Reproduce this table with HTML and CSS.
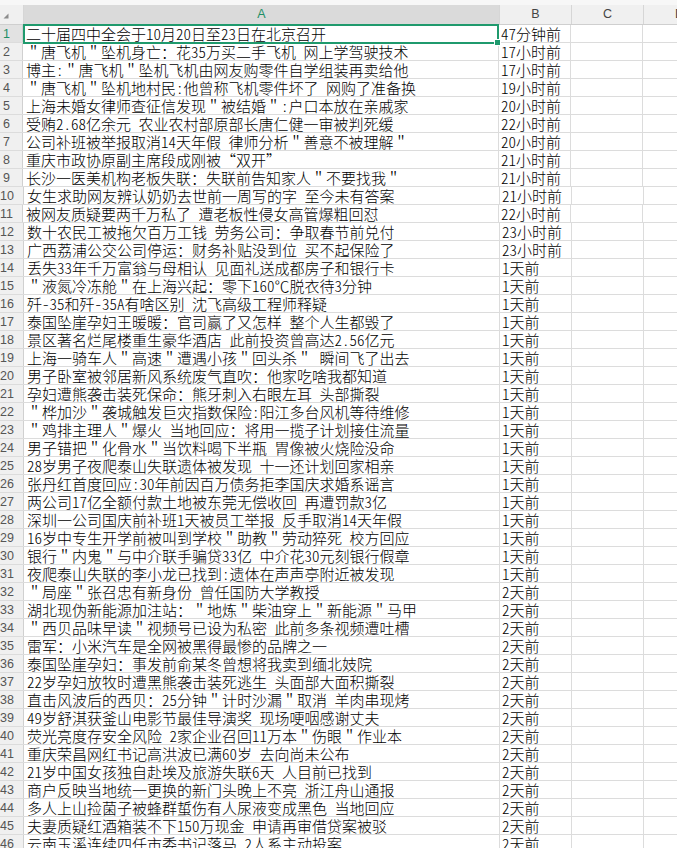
FILE: index.html
```html
<!DOCTYPE html>
<html lang="zh-CN">
<head>
<meta charset="utf-8">
<title>Sheet</title>
<link rel="stylesheet" href="styles.css">
</head>
<body>
<div class="sheet">
  <div class="topstrip"></div>
  <div class="hdr">
    <div class="corner"><svg width="23" height="19" viewBox="0 0 23 19"><polygon points="3.5,13.5 8.5,13.5 8.5,8.5" fill="#8c8c8c"/></svg></div>
    <div class="ch col-a sel">A</div>
    <div class="ch col-b">B</div>
    <div class="ch col-c">C</div>
    <div class="ch col-d">D</div>
  </div>
  <div class="grid">
    <div class="row"><div class="rh sel">1</div><div class="cell col-a">二十届四中全会于10月20日至23日在北京召开</div><div class="cell col-b">47分钟前</div><div class="cell col-c"></div><div class="cell col-d"></div></div>
    <div class="row"><div class="rh">2</div><div class="cell col-a"><span class="q">＂</span>唐飞机<span class="q">＂</span>坠机身亡：花35万买二手飞机 网上学驾驶技术</div><div class="cell col-b">17小时前</div><div class="cell col-c"></div><div class="cell col-d"></div></div>
    <div class="row"><div class="rh">3</div><div class="cell col-a">博主:<span class="q">＂</span>唐飞机<span class="q">＂</span>坠机飞机由网友购零件自学组装再卖给他</div><div class="cell col-b">17小时前</div><div class="cell col-c"></div><div class="cell col-d"></div></div>
    <div class="row"><div class="rh">4</div><div class="cell col-a"><span class="q">＂</span>唐飞机<span class="q">＂</span>坠机地村民:他曾称飞机零件坏了 网购了准备换</div><div class="cell col-b">19小时前</div><div class="cell col-c"></div><div class="cell col-d"></div></div>
    <div class="row"><div class="rh">5</div><div class="cell col-a">上海未婚女律师查征信发现<span class="q">＂</span>被结婚<span class="q">＂</span>:户口本放在亲戚家</div><div class="cell col-b">20小时前</div><div class="cell col-c"></div><div class="cell col-d"></div></div>
    <div class="row"><div class="rh">6</div><div class="cell col-a">受贿2.68亿余元 农业农村部原部长唐仁健一审被判死缓</div><div class="cell col-b">22小时前</div><div class="cell col-c"></div><div class="cell col-d"></div></div>
    <div class="row"><div class="rh">7</div><div class="cell col-a">公司补班被举报取消14天年假 律师分析<span class="q">＂</span>善意不被理解<span class="q">＂</span></div><div class="cell col-b">20小时前</div><div class="cell col-c"></div><div class="cell col-d"></div></div>
    <div class="row"><div class="rh">8</div><div class="cell col-a">重庆市政协原副主席段成刚被<span class="q">“</span>双开<span class="q">”</span></div><div class="cell col-b">21小时前</div><div class="cell col-c"></div><div class="cell col-d"></div></div>
    <div class="row"><div class="rh">9</div><div class="cell col-a">长沙一医美机构老板失联：失联前告知家人<span class="q">＂</span>不要找我<span class="q">＂</span></div><div class="cell col-b">21小时前</div><div class="cell col-c"></div><div class="cell col-d"></div></div>
    <div class="row"><div class="rh">10</div><div class="cell col-a">女生求助网友辨认奶奶去世前一周写的字 至今未有答案</div><div class="cell col-b">21小时前</div><div class="cell col-c"></div><div class="cell col-d"></div></div>
    <div class="row"><div class="rh">11</div><div class="cell col-a">被网友质疑要两千万私了 遭老板性侵女高管爆粗回怼</div><div class="cell col-b">22小时前</div><div class="cell col-c"></div><div class="cell col-d"></div></div>
    <div class="row"><div class="rh">12</div><div class="cell col-a">数十农民工被拖欠百万工钱 劳务公司：争取春节前兑付</div><div class="cell col-b">23小时前</div><div class="cell col-c"></div><div class="cell col-d"></div></div>
    <div class="row"><div class="rh">13</div><div class="cell col-a">广西荔浦公交公司停运：财务补贴没到位 买不起保险了</div><div class="cell col-b">23小时前</div><div class="cell col-c"></div><div class="cell col-d"></div></div>
    <div class="row"><div class="rh">14</div><div class="cell col-a">丢失33年千万富翁与母相认 见面礼送成都房子和银行卡</div><div class="cell col-b">1天前</div><div class="cell col-c"></div><div class="cell col-d"></div></div>
    <div class="row"><div class="rh">15</div><div class="cell col-a"><span class="q">＂</span>液氮冷冻舱<span class="q">＂</span>在上海兴起：零下160℃脱衣待3分钟</div><div class="cell col-b">1天前</div><div class="cell col-c"></div><div class="cell col-d"></div></div>
    <div class="row"><div class="rh">16</div><div class="cell col-a">歼-35和歼-35A有啥区别 沈飞高级工程师释疑</div><div class="cell col-b">1天前</div><div class="cell col-c"></div><div class="cell col-d"></div></div>
    <div class="row"><div class="rh">17</div><div class="cell col-a">泰国坠崖孕妇王暖暖：官司赢了又怎样 整个人生都毁了</div><div class="cell col-b">1天前</div><div class="cell col-c"></div><div class="cell col-d"></div></div>
    <div class="row"><div class="rh">18</div><div class="cell col-a">景区著名烂尾楼重生豪华酒店 此前投资曾高达2.56亿元</div><div class="cell col-b">1天前</div><div class="cell col-c"></div><div class="cell col-d"></div></div>
    <div class="row"><div class="rh">19</div><div class="cell col-a">上海一骑车人<span class="q">＂</span>高速<span class="q">＂</span>遭遇小孩<span class="q">＂</span>回头杀<span class="q">＂</span> 瞬间飞了出去</div><div class="cell col-b">1天前</div><div class="cell col-c"></div><div class="cell col-d"></div></div>
    <div class="row"><div class="rh">20</div><div class="cell col-a">男子卧室被邻居新风系统废气直吹：他家吃啥我都知道</div><div class="cell col-b">1天前</div><div class="cell col-c"></div><div class="cell col-d"></div></div>
    <div class="row"><div class="rh">21</div><div class="cell col-a">孕妇遭熊袭击装死保命：熊牙刺入右眼左耳 头部撕裂</div><div class="cell col-b">1天前</div><div class="cell col-c"></div><div class="cell col-d"></div></div>
    <div class="row"><div class="rh">22</div><div class="cell col-a"><span class="q">＂</span>桦加沙<span class="q">＂</span>袭城触发巨灾指数保险:阳江多台风机等待维修</div><div class="cell col-b">1天前</div><div class="cell col-c"></div><div class="cell col-d"></div></div>
    <div class="row"><div class="rh">23</div><div class="cell col-a"><span class="q">＂</span>鸡排主理人<span class="q">＂</span>爆火 当地回应：将用一揽子计划接住流量</div><div class="cell col-b">1天前</div><div class="cell col-c"></div><div class="cell col-d"></div></div>
    <div class="row"><div class="rh">24</div><div class="cell col-a">男子错把<span class="q">＂</span>化骨水<span class="q">＂</span>当饮料喝下半瓶 胃像被火烧险没命</div><div class="cell col-b">1天前</div><div class="cell col-c"></div><div class="cell col-d"></div></div>
    <div class="row"><div class="rh">25</div><div class="cell col-a">28岁男子夜爬泰山失联遗体被发现 十一还计划回家相亲</div><div class="cell col-b">1天前</div><div class="cell col-c"></div><div class="cell col-d"></div></div>
    <div class="row"><div class="rh">26</div><div class="cell col-a">张丹红首度回应:30年前因百万债务拒李国庆求婚系谣言</div><div class="cell col-b">1天前</div><div class="cell col-c"></div><div class="cell col-d"></div></div>
    <div class="row"><div class="rh">27</div><div class="cell col-a">两公司17亿全额付款土地被东莞无偿收回 再遭罚款3亿</div><div class="cell col-b">1天前</div><div class="cell col-c"></div><div class="cell col-d"></div></div>
    <div class="row"><div class="rh">28</div><div class="cell col-a">深圳一公司国庆前补班1天被员工举报 反手取消14天年假</div><div class="cell col-b">1天前</div><div class="cell col-c"></div><div class="cell col-d"></div></div>
    <div class="row"><div class="rh">29</div><div class="cell col-a">16岁中专生开学前被叫到学校<span class="q">＂</span>助教<span class="q">＂</span>劳动猝死 校方回应</div><div class="cell col-b">1天前</div><div class="cell col-c"></div><div class="cell col-d"></div></div>
    <div class="row"><div class="rh">30</div><div class="cell col-a">银行<span class="q">＂</span>内鬼<span class="q">＂</span>与中介联手骗贷33亿 中介花30元刻银行假章</div><div class="cell col-b">1天前</div><div class="cell col-c"></div><div class="cell col-d"></div></div>
    <div class="row"><div class="rh">31</div><div class="cell col-a">夜爬泰山失联的李小龙已找到:遗体在声声亭附近被发现</div><div class="cell col-b">1天前</div><div class="cell col-c"></div><div class="cell col-d"></div></div>
    <div class="row"><div class="rh">32</div><div class="cell col-a"><span class="q">＂</span>局座<span class="q">＂</span>张召忠有新身份 曾任国防大学教授</div><div class="cell col-b">2天前</div><div class="cell col-c"></div><div class="cell col-d"></div></div>
    <div class="row"><div class="rh">33</div><div class="cell col-a">湖北现伪新能源加注站：<span class="q">＂</span>地炼<span class="q">＂</span>柴油穿上<span class="q">＂</span>新能源<span class="q">＂</span>马甲</div><div class="cell col-b">2天前</div><div class="cell col-c"></div><div class="cell col-d"></div></div>
    <div class="row"><div class="rh">34</div><div class="cell col-a"><span class="q">＂</span>西贝品味早读<span class="q">＂</span>视频号已设为私密 此前多条视频遭吐槽</div><div class="cell col-b">2天前</div><div class="cell col-c"></div><div class="cell col-d"></div></div>
    <div class="row"><div class="rh">35</div><div class="cell col-a">雷军：小米汽车是全网被黑得最惨的品牌之一</div><div class="cell col-b">2天前</div><div class="cell col-c"></div><div class="cell col-d"></div></div>
    <div class="row"><div class="rh">36</div><div class="cell col-a">泰国坠崖孕妇：事发前俞某冬曾想将我卖到缅北妓院</div><div class="cell col-b">2天前</div><div class="cell col-c"></div><div class="cell col-d"></div></div>
    <div class="row"><div class="rh">37</div><div class="cell col-a">22岁孕妇放牧时遭黑熊袭击装死逃生 头面部大面积撕裂</div><div class="cell col-b">2天前</div><div class="cell col-c"></div><div class="cell col-d"></div></div>
    <div class="row"><div class="rh">38</div><div class="cell col-a">直击风波后的西贝：25分钟<span class="q">＂</span>计时沙漏<span class="q">＂</span>取消 羊肉串现烤</div><div class="cell col-b">2天前</div><div class="cell col-c"></div><div class="cell col-d"></div></div>
    <div class="row"><div class="rh">39</div><div class="cell col-a">49岁舒淇获釜山电影节最佳导演奖 现场哽咽感谢丈夫</div><div class="cell col-b">2天前</div><div class="cell col-c"></div><div class="cell col-d"></div></div>
    <div class="row"><div class="rh">40</div><div class="cell col-a">荧光亮度存安全风险 2家企业召回11万本<span class="q">＂</span>伤眼<span class="q">＂</span>作业本</div><div class="cell col-b">2天前</div><div class="cell col-c"></div><div class="cell col-d"></div></div>
    <div class="row"><div class="rh">41</div><div class="cell col-a">重庆荣昌网红书记高洪波已满60岁 去向尚未公布</div><div class="cell col-b">2天前</div><div class="cell col-c"></div><div class="cell col-d"></div></div>
    <div class="row"><div class="rh">42</div><div class="cell col-a">21岁中国女孩独自赴埃及旅游失联6天 人目前已找到</div><div class="cell col-b">2天前</div><div class="cell col-c"></div><div class="cell col-d"></div></div>
    <div class="row"><div class="rh">43</div><div class="cell col-a">商户反映当地统一更换的新门头晚上不亮 浙江舟山通报</div><div class="cell col-b">2天前</div><div class="cell col-c"></div><div class="cell col-d"></div></div>
    <div class="row"><div class="rh">44</div><div class="cell col-a">多人上山捡菌子被蜂群蜇伤有人尿液变成黑色 当地回应</div><div class="cell col-b">2天前</div><div class="cell col-c"></div><div class="cell col-d"></div></div>
    <div class="row"><div class="rh">45</div><div class="cell col-a">夫妻质疑红酒箱装不下150万现金 申请再审借贷案被驳</div><div class="cell col-b">2天前</div><div class="cell col-c"></div><div class="cell col-d"></div></div>
    <div class="row"><div class="rh">46</div><div class="cell col-a">云南玉溪连续四任市委书记落马 2人系主动投案</div><div class="cell col-b">2天前</div><div class="cell col-c"></div><div class="cell col-d"></div></div>
  </div>
  <div class="selbox"><span class="handle"></span></div>
</div>
</body>
</html>
```

FILE: styles.css
```css
html, body {
  margin: 0;
  padding: 0;
  background: #ffffff;
}

.sheet {
  position: relative;
  width: 677px;
  height: 848px;
  overflow: hidden;
  background: #ffffff;
}

.topstrip {
  height: 5px;
  background: #f7f7f7;
}

.hdr {
  display: flex;
  height: 20px;
  background: #f0f0f0;
  box-sizing: border-box;
  border-bottom: 1px solid #cfcfcf;
}

.corner {
  flex: 0 0 23px;
  box-sizing: border-box;
  border-right: 1px solid #d6d6d6;
  display: flex;
}

.ch {
  flex: 0 0 auto;
  box-sizing: border-box;
  border-right: 1px solid #d6d6d6;
  font-family: "Liberation Sans", Arial, sans-serif;
  font-size: 12.5px;
  color: #444444;
  text-align: center;
  line-height: 19px;
}

.ch.sel {
  background: #dadada;
  color: #1f8f66;
}

.col-a { width: 476px; }
.col-b { width: 72px; }
.col-c { width: 72px; }
.col-d { width: 72px; }

.grid {
  display: flex;
  flex-direction: column;
}

.row {
  display: flex;
  height: 18px;
  box-sizing: border-box;
  border-bottom: 1px solid #dcdcdc;
}

.rh {
  flex: 0 0 23px;
  box-sizing: border-box;
  padding-right: 9px;
  background: #f0f0f0;
  border-right: 1px solid #d0d0d0;
  font-family: "Liberation Sans", Arial, sans-serif;
  font-size: 12.5px;
  color: #555555;
  text-align: center;
  line-height: 18px;
  white-space: nowrap;
}

.rh.sel {
  background: #e2e2e2;
  color: #1f8f66;
}

.cell {
  flex: 0 0 auto;
  box-sizing: border-box;
  border-right: 1px solid #dcdcdc;
  font-family: "Noto Sans CJK SC", "Noto Sans CJK JP", sans-serif;
  font-feature-settings: "hwid";
  font-weight: 300;
  font-size: 15px;
  line-height: 17px;
  color: #000000;
  white-space: nowrap;
}

.cell .q {
  font-feature-settings: normal;
}

.cell.col-a { padding-left: 3px; }
.cell.col-b { padding-left: 2px; }

.selbox {
  position: absolute;
  left: 23px;
  top: 24px;
  width: 476px;
  height: 20px;
  box-sizing: border-box;
  border: 2px solid #1f9a6d;
}

.handle {
  position: absolute;
  right: -4px;
  bottom: -4px;
  width: 5px;
  height: 5px;
  background: #1f9a6d;
  border: 1px solid #ffffff;
}
```
